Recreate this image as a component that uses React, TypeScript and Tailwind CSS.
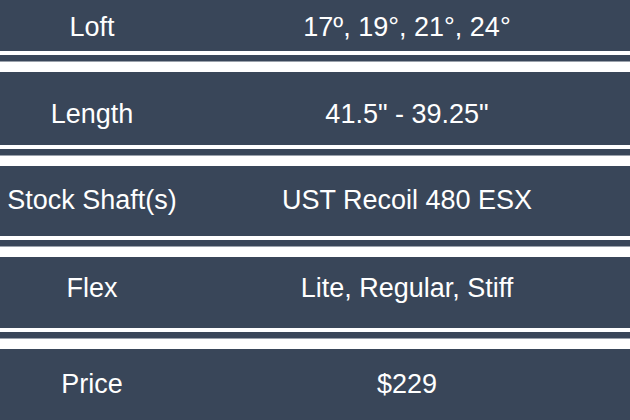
import React from "react";

const rows: { label: string; value: string; h: string }[] = [
  { label: "Loft", value: "17º, 19°, 21°, 24°", h: "h-[51px] pt-[3px]" },
  { label: "Length", value: "41.5\" - 39.25\"", h: "h-[73px] pt-[11px]" },
  { label: "Stock Shaft(s)", value: "UST Recoil 480 ESX", h: "h-[70px] pb-[2px]" },
  { label: "Flex", value: "Lite, Regular, Stiff", h: "h-[71px] pb-[9px]" },
  { label: "Price", value: "$229", h: "h-[73px] pb-[3px]" },
];

function Sep() {
  return (
    <div className="flex flex-col">
      <div className="h-[4px] bg-white" />
      <div className="h-[6px] bg-[#394659]" />
      <div className="h-[1px] bg-[#9aa1ab]" />
      <div className="h-[10px] bg-white" />
    </div>
  );
}

export default function App() {
  return (
    <div
      className="w-[630px] h-[420px] overflow-hidden bg-[#394659] text-white text-[27px] leading-none"
      style={{ fontFamily: '"Liberation Sans", Arial, sans-serif' }}
    >
      {rows.map((r, i) => (
        <React.Fragment key={r.label}>
          {i > 0 && <Sep />}
          <div className={`flex items-center bg-[#394659] ${r.h}`}>
            <div className="w-[184px] text-center">{r.label}</div>
            <div className="flex-1 text-center">{r.value}</div>
          </div>
        </React.Fragment>
      ))}
    </div>
  );
}
